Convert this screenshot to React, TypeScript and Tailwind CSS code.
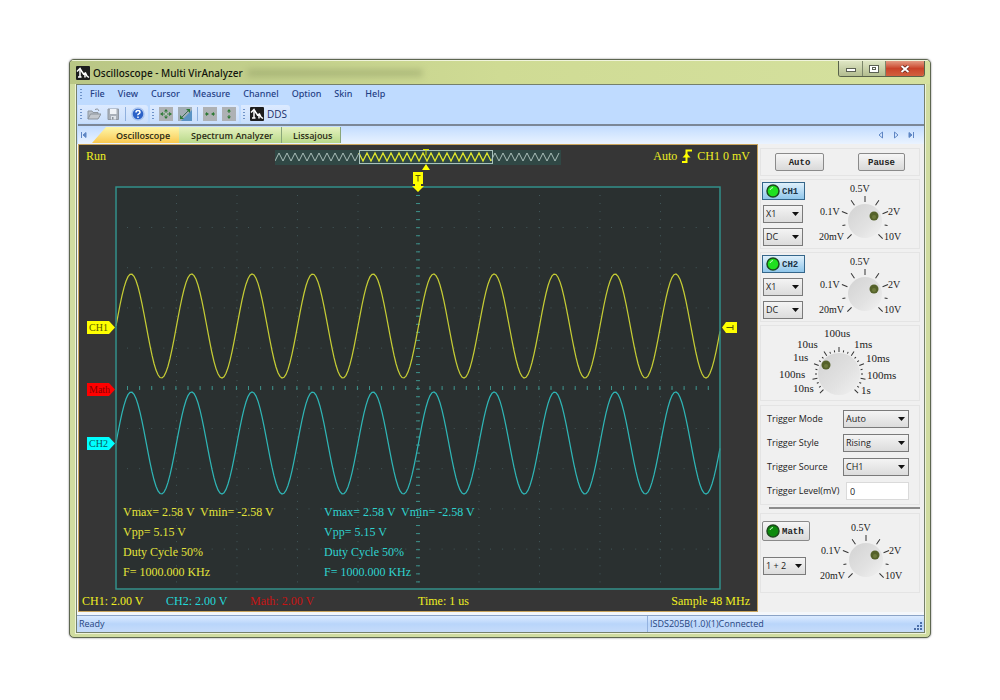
import type { ReactNode } from 'react';

const PLOT_W = 606;
const PLOT_H = 404;

const range = (n: number) => Array.from({ length: n }, (_, i) => i);

function sinePath(center: number, amp: number) {
  const period = 60.5;
  const points = range(303).map((i) => {
    const x = 1 + i * 2;
    const y = center - amp * Math.sin((2 * Math.PI * (x - 1)) / period);
    return `${x},${y.toFixed(1)}`;
  });
  return `M${points.join('L')}`;
}

function zigzag(from: number, to: number) {
  const points: string[] = [];
  for (let x = from; x <= to; x += 4) {
    points.push(`${x},${(x / 4) % 2 === 0 ? 12 : 4}`);
  }
  return points.join(' ');
}

function Grip() {
  return (
    <span className="flex flex-col gap-[2px] w-[2px] shrink-0" aria-hidden="true">
      {range(4).map((i) => (
        <span key={i} className="w-[2px] h-[1px] bg-[#6f93c8]" />
      ))}
    </span>
  );
}

function ScopeIcon() {
  return (
    <svg viewBox="0 0 14 14" className="w-[14px] h-[14px] shrink-0" aria-hidden="true">
      <rect width="14" height="14" rx="1" fill="#1d1d1d" />
      <path d="M1 5.5L4 2.5L5.5 5L7.5 8L9.5 7L11 10L13 11.5" fill="none" stroke="#fff" strokeWidth="1.5" />
      <path d="M4 3v8M2 11h3.500M9 8v3.500" stroke="#fff" strokeWidth="1.500" />
    </svg>
  );
}

function TitleBar() {
  return (
    <header className="relative flex items-center h-6 pl-[6px] pr-1 bg-linear-to-r from-[#b9c685] via-[#cfdb94] to-[#d5e19f] border-t border-[#f0f4dc]">
      <ScopeIcon />
      <h1 className="ml-[3px] text-[10px] leading-4 font-medium text-[#11130c] whitespace-nowrap font-['Noto_Sans',sans-serif]">Oscilloscope - Multi VirAnalyzer</h1>
      <div className="ml-1 h-2 w-44 rounded-full bg-[#7f8a55]/35 blur-[3px]" />
      <div className="absolute top-0 right-[5px] flex h-4 border border-t-0 border-[#59624a] rounded-b-[3px] overflow-hidden">
        <button aria-label="Minimize" className="w-6 flex items-center justify-center bg-linear-to-b from-[#dfe6c4] to-[#b3bd8f] border-r border-[#7c866a]">
          <span className="w-[10px] h-[4px] mt-[3px] bg-white border border-[#5b6152]" />
        </button>
        <button aria-label="Maximize" className="w-[23px] flex items-center justify-center bg-linear-to-b from-[#dfe6c4] to-[#b3bd8f] border-r border-[#7c866a]">
          <span className="w-[10px] h-[8px] bg-white border border-[#5b6152] flex items-center justify-center">
            <span className="w-[4px] h-[3px] border border-[#5b6152]" />
          </span>
        </button>
        <button aria-label="Close" className="w-[38px] flex items-center justify-center bg-linear-to-b from-[#e29a82] via-[#c9432a] to-[#d2603f]">
          <svg viewBox="0 0 10 8" className="w-[10px] h-2">
            <path d="M1.500 1L8.500 7M8.500 1L1.500 7" stroke="#6b2417" strokeWidth="3.500" />
            <path d="M1.500 1L8.500 7M8.500 1L1.500 7" stroke="#fff" strokeWidth="2" />
          </svg>
        </button>
      </div>
    </header>
  );
}

const menus = ['File', 'View', 'Cursor', 'Measure', 'Channel', 'Option', 'Skin', 'Help'];

function MenuBar() {
  return (
    <nav className="flex items-center h-[18px] pl-[2px] text-[9px] leading-4 font-medium text-[#1f3f86] font-['Noto_Sans',sans-serif]">
      <Grip />
      <div className="flex gap-[13px] ml-2">
        {menus.map((m) => (
          <button key={m}>{m}</button>
        ))}
      </div>
    </nav>
  );
}

function ToolGroup({ children }: { children: ReactNode }) {
  return (
    <div className="flex items-center h-[18px] pl-[2px] pr-[3px] gap-[5px] rounded-r-[3px] bg-linear-to-b from-[#dceaff] to-[#cadffb]">
      <Grip />
      {children}
    </div>
  );
}

function ToolButton({ label, children }: { label: string; children: ReactNode }) {
  return (
    <button aria-label={label} className="w-[14px] h-[14px] shrink-0">
      <svg viewBox="0 0 14 14" className="w-[14px] h-[14px]">{children}</svg>
    </button>
  );
}

function ToolBar() {
  return (
    <div className="flex items-center gap-[2px] h-[23px] border-b-2 border-[#7b8797]">
      <ToolGroup>
        <ToolButton label="Open">
          <path d="M1 12V4h4l1 1.500h5V7" fill="#b9c0c8" stroke="#8f979f" />
          <path d="M1 12L3.500 7H14L11 12Z" fill="#c3c8ce" stroke="#8b939b" />
          <path d="M8 2.500q3-2 4 1.500" fill="none" stroke="#8b939b" />
        </ToolButton>
        <ToolButton label="Save">
          <path d="M2 2h10.500v10.500H2z" fill="#a9b0b9" stroke="#9199a3" />
          <path d="M4 2h6.500v5H4z" fill="#f0f3f7" />
          <path d="M5 9h5v3.500H5z" fill="#dfe4ea" />
          <path d="M6 10h1.500v2.500H6z" fill="#8b939b" />
        </ToolButton>
        <span className="w-[1px] h-[14px] bg-[#8fb0de]" />
        <ToolButton label="Help">
          <circle cx="7" cy="7" r="6" fill="#2c62c8" stroke="#a9c4ee" strokeWidth="1.500" />
          <path d="M5 5.500q0-2 2-2t2 1.700q0 1-1.200 1.600t-.8 1.500M7 9.500v1.500" fill="none" stroke="#fff" strokeWidth="1.500" />
        </ToolButton>
      </ToolGroup>
      <ToolGroup>
        <ToolButton label="Zoom in both axes">
          <rect width="14" height="14" fill="#aeb1b4" />
          <path d="M7 2l2 2.500h-4zM7 12l2-2.500h-4zM1 7l3-2v4zM13 7l-3-2v4z" fill="#2d7a35" />
          <path d="M3 7h8M7 4v6" stroke="#4c8a52" strokeWidth="1" />
          <path d="M6 6h2v2H6z" fill="#b8c4b8" />
        </ToolButton>
        <ToolButton label="Fit waveform">
          <rect width="14" height="14" fill="#a3aeb6" />
          <path d="M3 14L14 3v11z" fill="#5b93c4" />
          <path d="M8 2h4v4zM2 8v4h4z" fill="#2d7a35" />
          <path d="M4 10L10 4" stroke="#3c6f55" />
        </ToolButton>
        <span className="w-[1px] h-[14px] bg-[#8fb0de]" />
        <ToolButton label="Zoom horizontally">
          <rect width="14" height="14" fill="#aeb1b4" />
          <path d="M6 7l-3-2v4zM8 7l3-2v4z" fill="#2d7a35" />
          <path d="M2 7h2M10 7h2" stroke="#2d7a35" strokeWidth="1" />
        </ToolButton>
        <ToolButton label="Zoom vertically">
          <rect width="14" height="14" fill="#aeb1b4" />
          <path d="M7 2l2 2.500h-4zM7 12l2-2.500h-4z" fill="#2d7a35" />
          <path d="M7 4v2M7 8v2" stroke="#2d7a35" strokeWidth="1" />
        </ToolButton>
      </ToolGroup>
      <ToolGroup>
        <button className="flex items-center gap-[3px] text-[10px] leading-4 font-medium text-[#1a2f6a]">
          <ScopeIcon />
          DDS
        </button>
      </ToolGroup>
    </div>
  );
}

function TabArrow({ label, d, filled }: { label: string; d: string; filled?: boolean }) {
  return (
    <button aria-label={label} className="w-2 h-2">
      <svg viewBox="0 0 8 8" className="w-2 h-2">
        <path d={d} fill={filled ? '#5f86c4' : 'none'} stroke="#5f86c4" strokeWidth="1" />
      </svg>
    </button>
  );
}

function TabBar() {
  return (
    <div className="flex items-end h-[18px] pb-[1px] pl-[2px] pr-[9px] bg-linear-to-b from-[#c2dcff] to-[#eaf3ff] text-[9px] leading-[15px] font-semibold text-[#2b2b14]">
      <div className="self-center flex">
        <TabArrow label="First tab" d="M1.500 1v6M6 1.500v5L3 4z" filled />
      </div>
      <div role="tablist" className="flex ml-1">
        <button role="tab" aria-selected="true" className="h-4 pl-6 pr-[9px] bg-linear-to-b from-[#fdf7a8] to-[#f9c94e] [clip-path:polygon(0_100%,14px_0,100%_0,100%_100%)]">Oscilloscope</button>
        <button role="tab" aria-selected="false" className="h-4 pl-3 pr-2 bg-linear-to-b from-[#e6f2c0] to-[#b9d98a] border-r border-[#8aa67a]">Spectrum Analyzer</button>
        <button role="tab" aria-selected="false" className="h-4 pl-[11px] pr-2 bg-linear-to-b from-[#e6f2c0] to-[#b9d98a] border-r border-[#8aa67a]">Lissajous</button>
      </div>
      <div className="self-center flex gap-[7px] ml-auto">
        <TabArrow label="Previous tab" d="M5.500 1v6L2 4z" />
        <TabArrow label="Next tab" d="M2.500 1v6L6 4z" />
        <TabArrow label="Last tab" d="M2 1.500v5L5 4zM6.500 1v6" filled />
      </div>
    </div>
  );
}

function Preview() {
  return (
    <svg viewBox="0 0 286 22" className="w-[286px] h-[22px]" aria-label="Record preview">
      <rect y="1" width="286" height="15" fill="#304845" />
      <polyline points={zigzag(0, 84)} fill="none" stroke="#a9bdb8" />
      <polyline points={zigzag(216, 284)} fill="none" stroke="#a9bdb8" />
      <polyline points={zigzag(84, 216)} fill="none" stroke="#e2e82c" strokeWidth="1.250" />
      <rect x="84.500" y="1.500" width="133" height="13" fill="none" stroke="#a9c2bd" />
      <path d="M148 .5h6M151 .5v6" stroke="#d4e000" />
      <path d="M147 21L151 15L155 21z" fill="#ff0" />
    </svg>
  );
}

function Graticule() {
  return (
    <g>
      <g fill="#42575a">
        {range(9).map((r) =>
          range(49).map((c) => (
            <rect key={`h${r}-${c}`} x={12 + c * 12.1} y={41 + r * 40.2} width="1" height="1" />
          )),
        )}
        {range(9).map((c) =>
          range(49).map((r) => (
            <rect key={`v${r}-${c}`} x={61 + c * 60.5} y={9 + r * 8.05} width="1" height="1" />
          )),
        )}
      </g>
      <g fill="#3d918a">
        {range(49).map((i) => (
          <rect key={i} x={12 + i * 12.1} y="200" width="1" height="4" />
        ))}
        {range(49).map((i) => (
          <rect key={i} x="301" y={9 + i * 8.05} width="4" height="1" />
        ))}
      </g>
    </g>
  );
}

function Marker({ label, className, color }: { label: string; className: string; color: string }) {
  return (
    <div className={`absolute right-0 w-7 h-[13px] pl-[2px] text-[10px] leading-[13px] [clip-path:polygon(0_0,22px_0,100%_50%,22px_100%,0_100%)] ${color} ${className}`}>
      {label}
    </div>
  );
}

function Measurements({ className }: { className: string }) {
  return (
    <div className={`absolute bottom-2 text-xs leading-5 whitespace-pre ${className}`}>
      <p>Vmax= 2.58 V  Vmin= -2.58 V</p>
      <p>Vpp= 5.15 V</p>
      <p>Duty Cycle 50%</p>
      <p>F= 1000.000 KHz</p>
    </div>
  );
}

function Scope() {
  return (
    <section className="flex-1 min-w-0 flex flex-col border border-[#c9a45c] bg-[#363636] text-xs leading-5 text-[#eeee22] font-['Liberation_Serif',serif]">
      <div className="flex items-start justify-between h-[41px] pl-[7px] pr-[7px] pt-[1px]">
        <span className="flex-1">Run</span>
        <div className="pt-[3px]">
          <Preview />
        </div>
        <span className="flex-1 flex items-center justify-end gap-1 whitespace-nowrap">
          Auto
          <svg viewBox="0 0 12 14" className="w-3 h-[14px]" aria-label="rising edge">
            <path d="M1 13H5.500V1.500H11" fill="none" stroke="#ff0" strokeWidth="2" />
            <path d="M1.500 8.500L5.500 4L9.500 8.500z" fill="#ff0" />
          </svg>
          CH1 0 mV
        </span>
      </div>

      <div className="flex">
        <div className="relative w-9 shrink-0">
          <Marker label="CH1" className="top-[135px]" color="bg-[#ffff00] text-[#5a5a00]" />
          <Marker label="Math" className="top-[197px]" color="bg-[#ff0000] text-[#8a0000]" />
          <Marker label="CH2" className="top-[251px]" color="bg-[#00ffff] text-[#0a5a5a]" />
        </div>

        <div className="relative flex-1 h-[404px] bg-[#2a3030]">
          <svg viewBox={`0 0 ${PLOT_W} ${PLOT_H}`} preserveAspectRatio="none" className="absolute inset-0 w-full h-full" aria-label="Waveforms">
            <Graticule />
            <path d={sinePath(140, 52)} fill="none" stroke="#c5cc35" strokeWidth="1.250" />
            <path d={sinePath(257, 51)} fill="none" stroke="#2fb5b5" strokeWidth="1.250" />
            <rect x="1" y="1" width={PLOT_W - 2} height={PLOT_H - 2} fill="none" stroke="#34908a" strokeWidth="1.500" />
          </svg>
          <svg viewBox="0 0 12 20" className="absolute -top-[14px] left-1/2 -translate-x-1/2 w-3 h-5" aria-label="Trigger position">
            <path d="M1 0h10v12H9v2h3l-6 6l-6-6h3v-2H1z" fill="#ff0" />
            <path d="M3.500 3.500h5M6 3.500v6" stroke="#55550a" />
          </svg>
          <Measurements className="left-2 text-[#e3e33a]" />
          <Measurements className="left-[calc(50%-94px)] text-[#2fd3cf]" />
        </div>

        <div className="relative w-9 shrink-0">
          <svg viewBox="0 0 15 11" className="absolute left-[1px] top-[136px] w-[15px] h-[11px]" aria-label="Trigger level">
            <path d="M0 5.500L4 0H15V11H4z" fill="#ff0" />
            <path d="M4.500 5.500H11M11 3v5" stroke="#55550a" />
          </svg>
        </div>
      </div>

      <div className="relative flex h-[21px] pl-[3px] pr-[7px] pt-[1px] whitespace-nowrap">
        <span className="w-21">CH1: 2.00 V</span>
        <span className="w-21 text-[#22d8d8]">CH2: 2.00 V</span>
        <span className="text-[#c81414]">Math: 2.00 V</span>
        <span className="absolute left-1/2">Time: 1 us</span>
        <span className="ml-auto">Sample 48 MHz</span>
      </div>
    </section>
  );
}

type Tick = { angle: number; from: number; to: number };

const voltTicks: Tick[] = range(9).map((i) => {
  const minor = i === 1 || i === 7;
  return { angle: -135 + i * 33.75, from: minor ? 20 : 19, to: minor ? 23 : 25 };
});

const timeTicks: Tick[] = range(25).map((i) => ({
  angle: -135 + i * 11.25,
  from: 22,
  to: i % 3 === 0 ? 27 : 24,
}));

function Ticks({ cx, cy, ticks }: { cx: number; cy: number; ticks: Tick[] }) {
  return (
    <g stroke="#333">
      {ticks.map((t) => (
        <line key={t.angle} x1={cx} x2={cx} y1={cy - t.from} y2={cy - t.to} transform={`rotate(${t.angle} ${cx} ${cy})`} />
      ))}
    </g>
  );
}

function Dial({ cx, cy, r, dotX, dotY }: { cx: number; cy: number; r: number; dotX: number; dotY: number }) {
  return (
    <g>
      <circle cx={cx} cy={cy} r={r} fill="url(#dial)" />
      <circle cx={dotX} cy={dotY} r="4.500" fill="#55622a" />
      <circle cx={dotX} cy={dotY + 1} r="2" fill="#6d7a3c" />
    </g>
  );
}

function VoltKnob({ label }: { label: string }) {
  return (
    <svg viewBox="0 0 90 64" className="w-[90px] h-16 shrink-0 font-['Liberation_Serif',serif] text-[10px]" aria-label={label}>
      <Ticks cx={49} cy={39} ticks={voltTicks} />
      <Dial cx={49} cy={39} r={17} dotX={58} dotY={34} />
      <g fill="#222">
        <text x="34" y="10">0.5V</text>
        <text x="4" y="33">0.1V</text>
        <text x="3" y="58">20mV</text>
        <text x="72" y="33">2V</text>
        <text x="68" y="58">10V</text>
      </g>
    </svg>
  );
}

function TimeKnob() {
  return (
    <svg viewBox="0 0 124 72" className="w-[124px] h-[72px] font-['Liberation_Serif',serif] text-[11px]" aria-label="Time base">
      <defs>
        <linearGradient id="dial" x1="0" y1="0" x2="1" y2="1">
          <stop offset="0" stopColor="#d2d2d2" />
          <stop offset="0.6" stopColor="#e2e2e2" />
          <stop offset="1" stopColor="#f2f2f2" />
        </linearGradient>
      </defs>
      <Ticks cx={60} cy={47} ticks={timeTicks} />
      <Dial cx={60} cy={47} r={21} dotX={47} dotY={38} />
      <g fill="#222">
        <text x="45" y="10">100us</text>
        <text x="18" y="21">10us</text>
        <text x="14" y="34">1us</text>
        <text x="0" y="51">100ns</text>
        <text x="14" y="65">10ns</text>
        <text x="75" y="21">1ms</text>
        <text x="87" y="35">10ms</text>
        <text x="88" y="52">100ms</text>
        <text x="82" y="67">1s</text>
      </g>
    </svg>
  );
}

function Select({ id, label, options, className }: { id: string; label?: string; options: string[]; className: string }) {
  return (
    <span className={`relative block ${className}`}>
      <select id={id} aria-label={label} className="block w-full h-[18px] pl-[2px] text-[9px] leading-4 appearance-none border border-[#7a7a7a] bg-linear-to-b from-[#f4f4f4] to-[#dcdcdc] text-[#222]">
        {options.map((o) => (
          <option key={o}>{o}</option>
        ))}
      </select>
      <svg viewBox="0 0 7 4" className="absolute right-1 top-[7px] w-[7px] h-1 pointer-events-none">
        <path d="M0 0h7L3.500 4z" fill="#111" />
      </svg>
    </span>
  );
}

function Led({ color }: { color: string }) {
  return (
    <svg viewBox="0 0 14 14" className="w-[14px] h-[14px]" aria-hidden="true">
      <circle cx="7" cy="7" r="6" fill={color} stroke="#1c4a1c" strokeWidth="1.500" />
      <path d="M4 6q.5-2 3-2.500" fill="none" stroke="#c8ffc8" strokeWidth="1" />
    </svg>
  );
}

function Group({ className = '', children }: { className?: string; children: ReactNode }) {
  return <div className={`border border-[#e4e4e4] ${className}`}>{children}</div>;
}

const mono = "font-['Liberation_Mono',monospace] font-bold text-[9px] leading-3";

function ChannelGroup({ name }: { name: string }) {
  return (
    <Group className="flex h-[70px] pl-[1px] pt-[2px]">
      <div className="flex flex-col gap-[5px] w-[54px]">
        <button aria-pressed="true" className={`flex items-center gap-[2px] w-[43px] h-[18px] pl-[3px] border border-[#35668a] bg-linear-to-b from-[#dff0fb] to-[#8fc6ea] text-[#1c3345] ${mono}`}>
          <Led color="#1fe01f" />
          <span className="pt-[2px]">{name}</span>
        </button>
        <Select id={`${name}-probe`} label={`${name} probe`} options={['X1', 'X10']} className="ml-[1px] w-10" />
        <Select id={`${name}-coupling`} label={`${name} coupling`} options={['DC', 'AC']} className="ml-[1px] w-10" />
      </div>
      <VoltKnob label={`${name} volts per division`} />
    </Group>
  );
}

function TriggerRow({ label, id, children }: { label: string; id: string; children: ReactNode }) {
  return (
    <div className="flex items-center justify-between h-6">
      <label htmlFor={id} className="whitespace-nowrap">{label}</label>
      {children}
    </div>
  );
}

function ControlPanel() {
  const plain = `h-[18px] pt-[2px] border border-[#8a8a8a] rounded-[2px] bg-linear-to-b from-[#f6f6f6] to-[#d9d9d9] text-[#222] ${mono}`;
  return (
    <aside className="w-[166px] shrink-0 pt-1 pl-[2px] pr-1 bg-[#f0f0f0] text-[9px] text-[#222]">
      <Group className="flex items-center justify-between h-7 pl-[14px] pr-[14px]">
        <button className={`w-[49px] ${plain}`}>Auto</button>
        <button className={`w-[47px] ${plain}`}>Pause</button>
      </Group>
      <div className="mt-[3px]">
        <ChannelGroup name="CH1" />
      </div>
      <div className="mt-[3px]">
        <ChannelGroup name="CH2" />
      </div>
      <Group className="mt-[3px] h-19 pl-[18px] pt-[1px]">
        <TimeKnob />
      </Group>
      <Group className="mt-1 pl-[6px] pr-[10px] pt-[1px] pb-[1px]">
        <TriggerRow label="Trigger Mode" id="trigger-mode">
          <Select id="trigger-mode" options={['Auto', 'Normal', 'Single']} className="w-[66px]" />
        </TriggerRow>
        <TriggerRow label="Trigger Style" id="trigger-style">
          <Select id="trigger-style" options={['Rising', 'Falling']} className="w-[66px]" />
        </TriggerRow>
        <TriggerRow label="Trigger Source" id="trigger-source">
          <Select id="trigger-source" options={['CH1', 'CH2']} className="w-[66px]" />
        </TriggerRow>
        <TriggerRow label="Trigger Level(mV)" id="trigger-level">
          <input id="trigger-level" defaultValue="0" className="w-[63px] h-[18px] pl-[3px] bg-white border border-[#dadada]" />
        </TriggerRow>
      </Group>
      <hr className="mt-[2px] ml-[9px] border-t-2 border-[#8c8c8c]" />
      <Group className="flex mt-1 h-20 pl-[1px] pt-[7px]">
        <div className="flex flex-col w-[55px] gap-4">
          <button aria-pressed="false" className={`flex items-center gap-[2px] w-12 h-5 pl-[3px] border border-[#8a8a8a] rounded-[2px] bg-linear-to-b from-[#f6f6f6] to-[#d9d9d9] ${mono}`}>
            <Led color="#0c8a0c" />
            <span className="pt-[2px]">Math</span>
          </button>
          <Select id="math-op" label="Math operation" options={['1 + 2', '1 - 2']} className="ml-[1px] w-[43px]" />
        </div>
        <VoltKnob label="Math volts per division" />
      </Group>
    </aside>
  );
}

function StatusBar() {
  return (
    <footer className="flex items-center h-[17px] mt-[3px] pl-[2px] bg-linear-to-b from-[#dcebff] via-[#b9d5fa] to-[#c6dcfa] border-t border-[#8ba3c6] text-[9px] leading-4 text-[#27457f]">
      <span className="flex-1">Ready</span>
      <span className="w-[265px] pl-[2px] border-l border-[#93b2e0]">ISDS205B(1.0)(1)Connected</span>
      <svg viewBox="0 0 12 12" className="w-3 h-3 self-end" aria-hidden="true">
        <path d="M8 2h2v2H8zM8 5h2v2H8zM5 5h2v2H5zM8 8h2v2H8zM5 8h2v2H5zM2 8h2v2H2z" fill="#4a6ea8" />
      </svg>
    </footer>
  );
}

export default function App() {
  return (
    <main className="min-h-screen bg-white px-[69px] py-[59px] font-['Open_Sans','Noto_Sans',sans-serif]">
      <div className="border border-[#5d6650] rounded-[5px] bg-[#d0dca0] overflow-hidden shadow-[0_0_2px_#777]">
        <TitleBar />
        <div className="ml-[6px] mr-[5px] mb-1 border border-[#75806b] bg-[#f4f7fb] shadow-[0_0_0_1px_#eef3d8]">
          <div className="pl-[1px] bg-[#bfdbff]">
            <MenuBar />
            <ToolBar />
            <TabBar />
          </div>
          <div className="flex pl-[1px]">
            <Scope />
            <ControlPanel />
          </div>
          <StatusBar />
        </div>
      </div>
    </main>
  );
}
